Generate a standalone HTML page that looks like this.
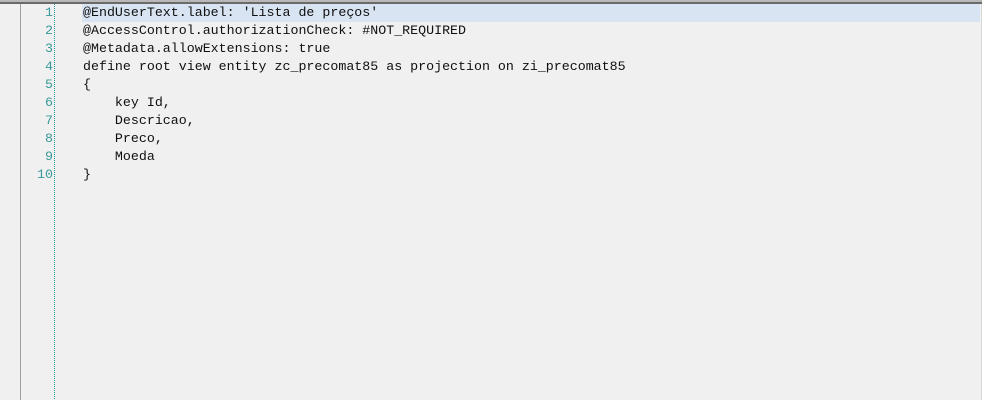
<!DOCTYPE html>
<html><head><meta charset="utf-8"><style>
body{margin:0;width:982px;height:400px;background:#f0f0f0;position:relative;overflow:hidden;font-family:"Liberation Mono",monospace;font-size:13.3px;}
.top{position:absolute;left:0;top:0;width:982px;height:2px;background:#b8b8b8;}
.top2{position:absolute;left:0;top:2px;width:982px;height:2px;background:#6a6a6a;}
.vl{position:absolute;left:20px;top:4px;width:1px;height:396px;background:#a0a0a0;}
.dot{position:absolute;left:54px;top:4px;width:1px;height:396px;background:repeating-linear-gradient(to bottom,#1f9a9a 0 1px,transparent 1px 2px);}
.hl{position:absolute;left:82px;top:4px;width:898px;height:18px;background:#d8e4f2;}
.rl{position:absolute;left:981px;top:4px;width:1px;height:396px;background:#d8d8d8;}
.ln{position:absolute;left:20px;width:33px;text-align:right;color:#3a9a9a;line-height:18px;}
.tx{position:absolute;left:83px;color:#101010;line-height:18px;white-space:pre;}
</style></head><body>
<div class="top"></div><div class="top2"></div>
<div class="hl"></div>
<div class="vl"></div><div class="dot"></div><div class="rl"></div>
<div class="ln" style="top:4px">1<br>2<br>3<br>4<br>5<br>6<br>7<br>8<br>9<br>10</div>
<div class="tx" style="top:4px">@EndUserText.label: 'Lista de preços'
@AccessControl.authorizationCheck: #NOT_REQUIRED
@Metadata.allowExtensions: true
define root view entity zc_precomat85 as projection on zi_precomat85
{
    key Id,
    Descricao,
    Preco,
    Moeda
}</div>
</body></html>
